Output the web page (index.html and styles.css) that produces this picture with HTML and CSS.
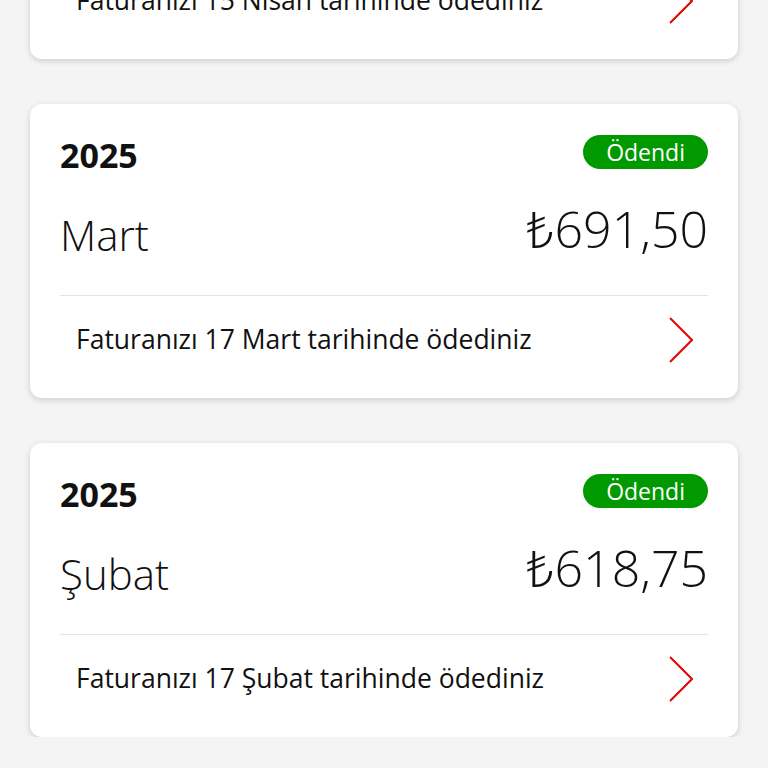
FILE: index.html
```html
<!DOCTYPE html>
<html lang="tr">
<head>
    <meta charset="UTF-8">
    <meta name="viewport" content="width=device-width, initial-scale=1.0">
    <title>Faturalarım</title>
    <link rel="stylesheet" href="styles.css">
</head>
<body>
    <div class="bills">
        <div class="bill-card">
            <div class="bill-head">
                <span class="bill-year">2025</span>
                <span class="badge">Ödendi</span>
            </div>
            <div class="bill-main">
                <span class="bill-month">Nisan</span>
                <span class="bill-amount">₺702,25</span>
            </div>
            <div class="bill-divider"></div>
            <div class="bill-foot">
                <span class="bill-note">Faturanızı 15 Nisan tarihinde ödediniz</span>
                <svg class="chevron" viewBox="0 0 24 46" width="24" height="46"><polyline points="1,1 23,23 1,45" /></svg>
            </div>
        </div>

        <div class="bill-card">
            <div class="bill-head">
                <span class="bill-year">2025</span>
                <span class="badge">Ödendi</span>
            </div>
            <div class="bill-main">
                <span class="bill-month">Mart</span>
                <span class="bill-amount">₺691,50</span>
            </div>
            <div class="bill-divider"></div>
            <div class="bill-foot">
                <span class="bill-note">Faturanızı 17 Mart tarihinde ödediniz</span>
                <svg class="chevron" viewBox="0 0 24 46" width="24" height="46"><polyline points="1,1 23,23 1,45" /></svg>
            </div>
        </div>

        <div class="bill-card">
            <div class="bill-head">
                <span class="bill-year">2025</span>
                <span class="badge">Ödendi</span>
            </div>
            <div class="bill-main">
                <span class="bill-month">Şubat</span>
                <span class="bill-amount">₺618,75</span>
            </div>
            <div class="bill-divider"></div>
            <div class="bill-foot">
                <span class="bill-note">Faturanızı 17 Şubat tarihinde ödediniz</span>
                <svg class="chevron" viewBox="0 0 24 46" width="24" height="46"><polyline points="1,1 23,23 1,45" /></svg>
            </div>
        </div>
    </div>
</body>
</html>
```

FILE: styles.css
```css
body {
    margin: 0;
    font-family: "Open Sans", "Noto Sans", sans-serif;
    background-color: #f4f4f4;
    color: #111;
    overflow: hidden;
}
.bills {
    display: flex;
    flex-direction: column;
    gap: 45px;
    margin-top: -235px;
    padding: 0 30px;
}
.bill-card {
    background-color: #fff;
    border-radius: 12px;
    box-shadow: 0 2px 6px rgba(0, 0, 0, 0.16);
    padding: 31px 30px 36px;
}
.bill-head {
    display: flex;
    justify-content: space-between;
    align-items: flex-start;
    height: 40px;
}
.bill-year {
    font-size: 34px;
    font-weight: 700;
    line-height: 40px;
}
.badge {
    background-color: #009a00;
    color: #fff;
    font-size: 23px;
    line-height: 34px;
    height: 34px;
    padding: 0 23px;
    border-radius: 17px;
}
.bill-main {
    display: flex;
    justify-content: space-between;
    align-items: flex-end;
    margin: 20px 0 32px;
    height: 68px;
}
.bill-month {
    font-size: 42px;
    font-weight: 300;
    line-height: 57px;
}
.bill-amount {
    font-size: 50px;
    font-weight: 300;
    line-height: 68px;
}
.bill-divider {
    height: 1px;
    background-color: #e4e4e4;
}
.bill-foot {
    display: flex;
    justify-content: space-between;
    align-items: center;
    padding: 21px 15px 0 16px;
    height: 45px;
}
.bill-note {
    font-size: 26.5px;
    line-height: 45px;
    white-space: nowrap;
}
.chevron {
    fill: none;
    stroke: #e60000;
    stroke-width: 2;
}
```
